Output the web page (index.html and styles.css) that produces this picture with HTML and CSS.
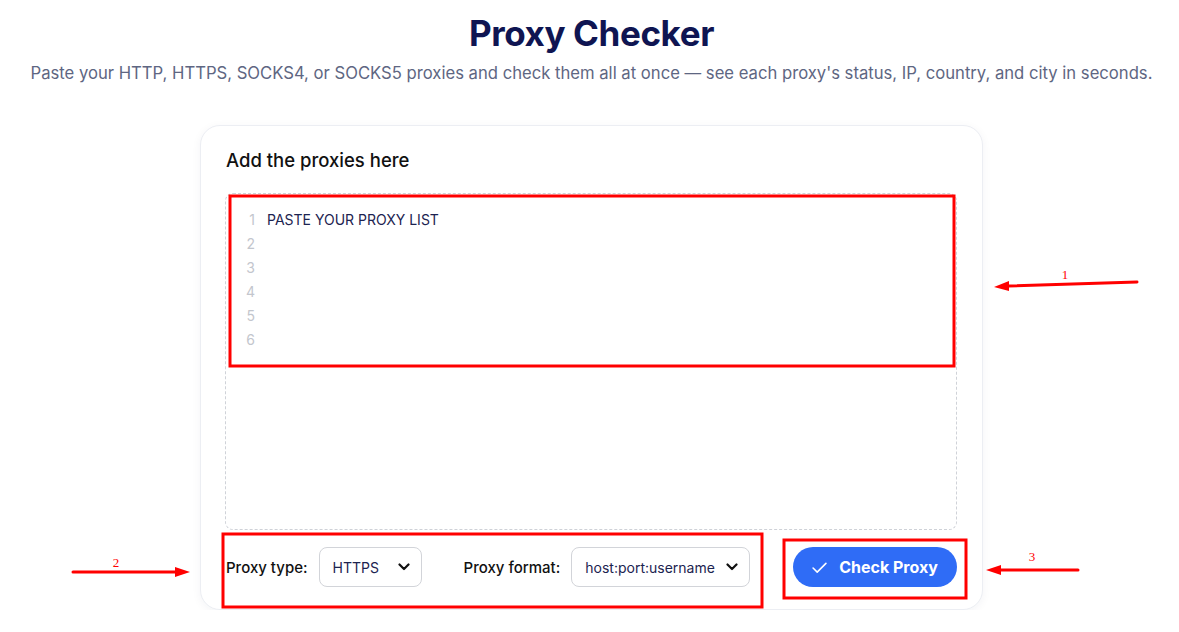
FILE: index.html
```html
<!DOCTYPE html>
<html lang="en">
<head>
<meta charset="UTF-8">
<meta name="viewport" content="width=device-width, initial-scale=1.0">
<title>Proxy Checker</title>
<link rel="stylesheet" href="styles.css">
</head>
<body>

<div class="page">
  <header class="hero">
    <h1>Proxy Checker</h1>
    <p>Paste your HTTP, HTTPS, SOCKS4, or SOCKS5 proxies and check them all at once — see each proxy's status, IP, country, and city in seconds.</p>
  </header>

  <section class="card">
    <h2>Add the proxies here</h2>

    <div class="editor">
      <div class="gutter">
        <span>1</span><span>2</span><span>3</span><span>4</span><span>5</span><span>6</span>
      </div>
      <div class="code">
        <div>PASTE YOUR PROXY LIST</div>
      </div>
    </div>

    <div class="controls">
      <div class="opts">
        <label class="opt">
          <span class="lbl">Proxy type:</span>
          <span class="select type">HTTPS
            <svg viewBox="0 0 12 8" class="chev"><path d="M1.5 1.5 6 6l4.5-4.5"/></svg>
          </span>
        </label>
        <label class="opt">
          <span class="lbl">Proxy format:</span>
          <span class="select fmt">host:port:username
            <svg viewBox="0 0 12 8" class="chev"><path d="M1.5 1.5 6 6l4.5-4.5"/></svg>
          </span>
        </label>
      </div>
      <button class="check">
        <svg viewBox="0 0 16 12" class="tick"><path d="M1 6.5 5.5 11 15 1.5"/></svg>
        Check Proxy
      </button>
    </div>
  </section>
</div>

<!-- annotation layer -->
<svg class="notes" viewBox="0 0 1179 632">
  <g fill="none" stroke="#f00" stroke-width="3">
    <rect x="230" y="196" width="724" height="170"/>
    <rect x="223" y="534" width="539" height="73"/>
    <rect x="784" y="540" width="182" height="58"/>
  </g>
  <g stroke="#f00" stroke-width="3" stroke-linecap="round">
    <line x1="1137" y1="282" x2="1008" y2="286"/>
    <line x1="73" y1="572" x2="176" y2="572"/>
    <line x1="1078" y1="570" x2="1000" y2="570"/>
  </g>
  <g fill="#f00">
    <polygon points="994,287 1009,281 1009,291"/>
    <polygon points="190,572 175,567 175,577"/>
    <polygon points="986,570 1001,565 1001,575"/>
  </g>
  <g fill="#f00" font-family="Liberation Serif, serif" font-size="13" text-anchor="middle">
    <text x="1065" y="279">1</text>
    <text x="116" y="567">2</text>
    <text x="1032" y="561">3</text>
  </g>
</svg>

</body>
</html>
```

FILE: styles.css
```css
/* —— base —— */
*{box-sizing:border-box;margin:0;padding:0}
html,body{background:#fff;overflow:hidden}
body{font-family:Inter,"Noto Sans",sans-serif;color:#111}
.page{padding-left:4px}

/* —— hero —— */
.hero{text-align:center;padding-top:11px}
.hero h1{font-size:35px;line-height:44px;font-weight:700;color:#0f1552;letter-spacing:-.4px}
.hero p{margin-top:6px;font-size:16.65px;line-height:24px;color:#5e6682}

/* —— card —— */
.card{
  width:783px;margin:40px auto 0;padding:22px 25px 22px 25px;
  border:1px solid #eceef3;border-radius:20px;background:#fff;
  box-shadow:0 2px 10px rgba(20,30,70,.05);
}
.card h2{font-size:18.5px;font-weight:500;line-height:24px;color:#111}

.editor{
  display:flex;height:337px;margin-top:21px;margin-left:-1px;
  border:1px dashed #cfd2d8;border-radius:8px;
  padding-top:14px;font-size:14px;line-height:24px;
}
.gutter{width:41px;padding-right:12px;display:flex;flex-direction:column;align-items:flex-end;color:#c3c6cd}
.code{color:#1c2350}

/* —— controls —— */
.controls{display:flex;align-items:center;justify-content:space-between;margin-top:17px}
.opts{display:flex;align-items:center;gap:42px}
.opt{display:flex;align-items:center;gap:11px}
.lbl{font-size:15px;font-weight:500;color:#111}
.select{
  display:flex;align-items:center;justify-content:space-between;
  height:40px;padding:0 11px 0 13px;
  border:1px solid #d2d4d9;border-radius:8px;
  font-size:14px;color:#1c2350;background:#fff;
}
.select.type{width:103px}
.select.fmt{width:179px}
.chev{width:12px;height:8px;fill:none;stroke:#111;stroke-width:2.2;stroke-linecap:round;stroke-linejoin:round}

.check{
  display:flex;align-items:center;justify-content:center;gap:12px;
  width:164px;height:40px;border:0;border-radius:20px;
  background:#2f6cf6;color:#fff;
  font-family:inherit;font-size:16px;font-weight:700;
}
.tick{width:15px;height:11px;fill:none;stroke:#fff;stroke-width:1.7;stroke-linecap:round;stroke-linejoin:round}

/* —— annotations —— */
.notes{position:absolute;left:0;top:0;width:1179px;height:632px;pointer-events:none}
```
